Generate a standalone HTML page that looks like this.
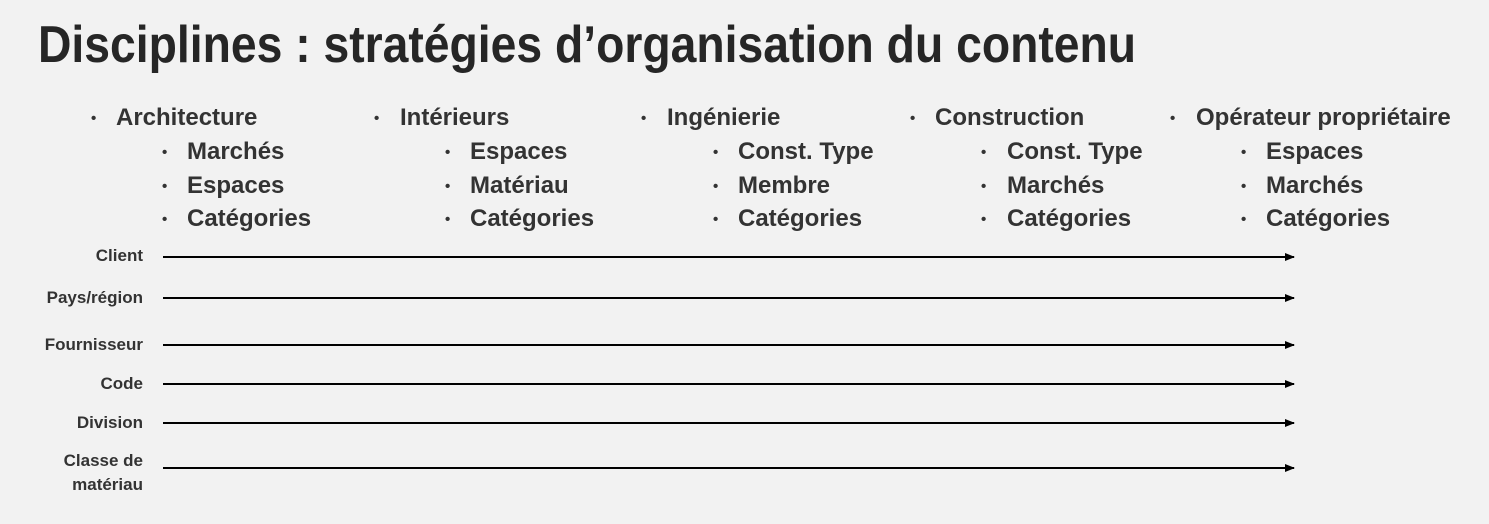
<!DOCTYPE html>
<html><head><meta charset="utf-8"><style>
body{margin:0;width:1489px;height:524px;background:#f2f2f2;overflow:hidden;position:relative;font-family:"Liberation Sans",sans-serif;font-weight:bold;color:#333}
.t{position:absolute;line-height:1;white-space:nowrap}
.h{font-size:24px}
.b{font-size:15px}
.l{font-size:17px;right:1346px;text-align:right}
</style></head><body>
<div class="t" style="left:38px;top:19px;font-size:52px;color:#262626;transform:scaleX(0.89);transform-origin:left">Disciplines : stratégies d’organisation du contenu</div>

<div class="t b" style="left:91px;top:111px">•</div><div class="t h" style="left:116px;top:106px">Architecture</div>
<div class="t b" style="left:162px;top:145px">•</div><div class="t h" style="left:187px;top:140px">Marchés</div>
<div class="t b" style="left:162px;top:179px">•</div><div class="t h" style="left:187px;top:174px">Espaces</div>
<div class="t b" style="left:162px;top:212px">•</div><div class="t h" style="left:187px;top:207px">Catégories</div>

<div class="t b" style="left:374px;top:111px">•</div><div class="t h" style="left:400px;top:106px">Intérieurs</div>
<div class="t b" style="left:445px;top:145px">•</div><div class="t h" style="left:470px;top:140px">Espaces</div>
<div class="t b" style="left:445px;top:179px">•</div><div class="t h" style="left:470px;top:174px">Matériau</div>
<div class="t b" style="left:445px;top:212px">•</div><div class="t h" style="left:470px;top:207px">Catégories</div>

<div class="t b" style="left:641px;top:111px">•</div><div class="t h" style="left:667px;top:106px">Ingénierie</div>
<div class="t b" style="left:713px;top:145px">•</div><div class="t h" style="left:738px;top:140px">Const. Type</div>
<div class="t b" style="left:713px;top:179px">•</div><div class="t h" style="left:738px;top:174px">Membre</div>
<div class="t b" style="left:713px;top:212px">•</div><div class="t h" style="left:738px;top:207px">Catégories</div>

<div class="t b" style="left:910px;top:111px">•</div><div class="t h" style="left:935px;top:106px">Construction</div>
<div class="t b" style="left:981px;top:145px">•</div><div class="t h" style="left:1007px;top:140px">Const. Type</div>
<div class="t b" style="left:981px;top:179px">•</div><div class="t h" style="left:1007px;top:174px">Marchés</div>
<div class="t b" style="left:981px;top:212px">•</div><div class="t h" style="left:1007px;top:207px">Catégories</div>

<div class="t b" style="left:1170px;top:111px">•</div><div class="t h" style="left:1196px;top:106px">Opérateur propriétaire</div>
<div class="t b" style="left:1241px;top:145px">•</div><div class="t h" style="left:1266px;top:140px">Espaces</div>
<div class="t b" style="left:1241px;top:179px">•</div><div class="t h" style="left:1266px;top:174px">Marchés</div>
<div class="t b" style="left:1241px;top:212px">•</div><div class="t h" style="left:1266px;top:207px">Catégories</div>

<div class="t l" style="top:247px">Client</div>
<div class="t l" style="top:289px">Pays/région</div>
<div class="t l" style="top:336px">Fournisseur</div>
<div class="t l" style="top:375px">Code</div>
<div class="t l" style="top:414px">Division</div>
<div class="t l" style="top:449px;line-height:24px">Classe de<br>matériau</div>

<svg width="1489" height="524" style="position:absolute;left:0;top:0">
<defs><marker id="a" markerWidth="10" markerHeight="8" refX="9" refY="4" orient="auto" markerUnits="userSpaceOnUse"><path d="M0,0 L10,4 L0,8 Z" fill="#000"/></marker></defs>
<g stroke="#000" stroke-width="2" marker-end="url(#a)">
<line x1="163" y1="257" x2="1294" y2="257"/>
<line x1="163" y1="298" x2="1294" y2="298"/>
<line x1="163" y1="345" x2="1294" y2="345"/>
<line x1="163" y1="384" x2="1294" y2="384"/>
<line x1="163" y1="423" x2="1294" y2="423"/>
<line x1="163" y1="468" x2="1294" y2="468"/>
</g></svg>
</body></html>
